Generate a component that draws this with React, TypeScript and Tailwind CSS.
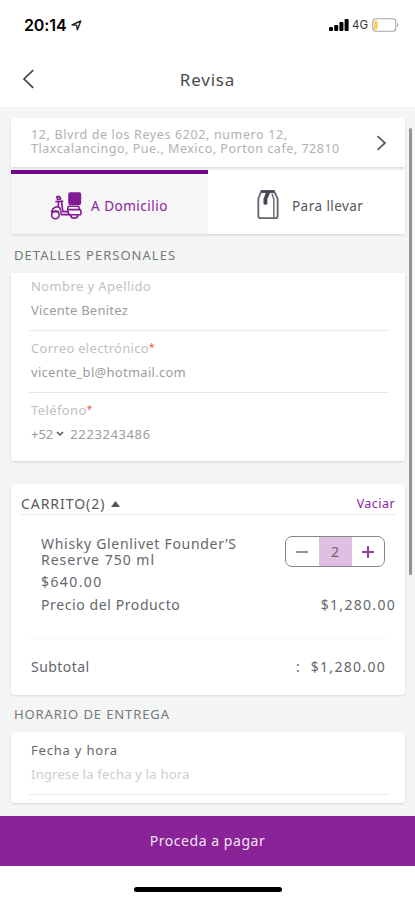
import { useState } from "react";

const fields = [
  { label: "Nombre y Apellido", value: "Vicente Benitez", required: false, labelClass: "tracking-[0.4px]", valueClass: "tracking-[0.25px]" },
  { label: "Correo electrónico", value: "vicente_bl@hotmail.com", required: true, labelClass: "tracking-[0.3px]", valueClass: "tracking-[0.28px]" },
];

function StatusBar() {
  return (
    <div className="h-[50px] pl-6 pr-4 flex items-center justify-between text-black">
      <div className="flex items-center gap-1">
        <span className="font-['Inter',sans-serif] font-semibold text-[16px] leading-5 tracking-[-0.1px]">20:14</span>
        <svg width="11" height="11" viewBox="0 0 11 11" fill="none" stroke="#222" strokeWidth="1.4" strokeLinejoin="round">
          <path d="M1 4.8 L9.8 1 L6.4 9.8 L5.6 5.4 Z" />
        </svg>
      </div>
      <div className="flex items-center">
        <svg width="20" height="12" viewBox="0 0 20 12" fill="currentColor">
          <rect x="0" y="8" width="4" height="4" rx="1" />
          <rect x="5.2" y="6" width="4" height="6" rx="1" />
          <rect x="10.4" y="3" width="4" height="9" rx="1" />
          <rect x="15.6" y="0" width="4" height="12" rx="1" />
        </svg>
        <span className="ml-[3px] font-['Inter',sans-serif] text-[11.5px] leading-4 text-[#333]">4G</span>
        <svg className="ml-1" width="27" height="14" viewBox="0 0 27 14" fill="none">
          <rect x="0.8" y="0.8" width="23" height="12.4" rx="3" stroke="#a3a3a3" strokeWidth="1.1" />
          <rect x="2.2" y="2.4" width="3.4" height="9.2" rx="1.4" fill="#fbcf4a" />
          <path d="M25.2 5 C26.8 5.6 26.8 8.4 25.2 9 Z" fill="#a3a3a3" />
        </svg>
      </div>
    </div>
  );
}

function ScooterIcon() {
  return (
    <svg className="mt-[3px]" width="32" height="28" viewBox="0 0 32 28" fill="none" stroke="#821b94" strokeWidth="1.6" strokeLinecap="round" strokeLinejoin="round">
      <rect x="19" y="1" width="11.4" height="11.2" rx="1.2" fill="#821b94" />
      <path d="M6.8 4.8 L9.4 4.4 L10.8 7 L7.4 7.4 Z M6 9.6 L12.8 9.2" />
      <path d="M8.8 9.6 L8 15 M11.6 9.4 L12.8 19.6 H18" />
      <path d="M1.6 19.6 C2.4 15.4 7 13.4 10 16 L11.4 22.6 H19.4" />
      <path d="M1.6 19.6 H8.4" />
      <circle cx="5.4" cy="22.9" r="3.8" />
      <path d="M18.4 14.2 H28.6 L29.4 17 C31.2 18.4 31.4 20.6 30.6 22.8 H19.4 C17.4 20 17.2 17 18.4 14.2 Z" />
      <path d="M18.6 17.6 H29" />
      <path d="M20.5 23 A3.8 3.8 0 0 0 28 23" />
    </svg>
  );
}

function BagIcon() {
  return (
    <svg className="ml-px mt-px" width="22" height="31" viewBox="0 0 23 31" fill="none" stroke="#666572" strokeWidth="1.9" strokeLinejoin="round">
      <path d="M4.6 1.4 H17.8 L21.6 9.4 V27.4 Q21.6 29.8 19.2 29.8 H3.8 Q1.4 29.8 1.4 27.4 V9.4 Z" />
      <path d="M4.6 2.2 H17.8" stroke="#454356" strokeWidth="2.4" />
      <path d="M15.6 4 L17.6 10 V29.4" strokeWidth="1.5" />
      <path d="M9.4 3.2 H13.6 L10.6 9.8 V15 L8.8 15.8 L7 15 V9.8 Z" fill="#454356" stroke="#454356" strokeWidth="0.4" />
    </svg>
  );
}

function App() {
  const [tab, setTab] = useState("domicilio");
  const [quantity, setQuantity] = useState(2);

  return (
    <div className="relative h-[900px] w-[415px] overflow-hidden bg-white flex flex-col font-['Noto_Sans',sans-serif] text-[#66666b]">
      <StatusBar />
      <header className="h-[58px] shrink-0 grid grid-cols-3 items-center border-b border-[#f0f0f0] pt-px">
        <svg className="ml-[22px]" width="13" height="20" viewBox="0 0 13 20" fill="none" stroke="#3c3b4b" strokeWidth="1.6">
          <path d="M11.2 1.2 L2 10 L11.2 18.8" />
        </svg>
        <h1 className="text-center text-[17px] leading-6 tracking-[0.8px] text-[#4b4b4f] pt-px">Revisa</h1>
      </header>

      <main className="h-[708px] shrink-0 bg-[#f4f5f5] pl-[11px] pr-[10px] pt-[10px]">
        <section className="h-[49px] bg-white shadow-sm rounded-t-sm flex items-center justify-between pl-5 pr-[18px]">
          <p className="text-[12.5px] leading-[14px] text-[#b1b1b1] whitespace-nowrap pb-[2px]">
            <span className="block tracking-[0.62px]">12, Blvrd de los Reyes 6202, numero 12,</span>
            <span className="block tracking-[0.52px]">Tlaxcalancingo, Pue., Mexico, Porton cafe, 72810</span>
          </p>
          <svg width="11" height="16" viewBox="0 0 11 16" fill="none" stroke="#5d5d60" strokeWidth="1.8">
            <path d="M1.5 1.2 L9 8 L1.5 14.8" />
          </svg>
        </section>

        <section className="mt-[3px] h-[64px] bg-white shadow-sm flex">
          <button
            className={`w-[197px] flex items-center pl-[39px] gap-[9px] border-t-4 ${tab === "domicilio" ? "border-[#72078a] bg-[#f6f6f6] text-[#8b239c]" : "border-transparent"}`}
            onClick={() => setTab("domicilio")}
          >
            <ScooterIcon />
            <span className="text-[13.5px] leading-5 tracking-[0.5px] pt-1">A Domicilio</span>
          </button>
          <button
            className={`w-[197px] flex items-center pl-[48px] gap-[13px] border-t-4 ${tab === "llevar" ? "border-[#72078a] bg-[#f6f6f6] text-[#8b239c]" : "border-transparent text-[#55555a]"}`}
            onClick={() => setTab("llevar")}
          >
            <BagIcon />
            <span className="text-[13.5px] leading-5 tracking-[0.45px] pt-1">Para llevar</span>
          </button>
        </section>

        <h2 className="h-[39px] pl-[3px] pt-[11px] text-[13px] leading-5 tracking-[1.03px] text-[#77787a]">DETALLES PERSONALES</h2>

        <section className="h-[188px] bg-white shadow-sm pl-[18px] pr-4 text-[13px] leading-5">
          {fields.map((field, i) => (
            <div key={field.label} className={`border-b border-[#e9e9e9] pl-[2px] ${i === 0 ? "h-[58px] pt-[3px]" : "h-[62px] pt-[7px]"}`}>
              <p className={`h-6 text-[#c1c1c1] ${field.labelClass}`}>
                {field.label}
                {field.required && <span className="text-[#f25555] text-[10px] align-[2px] leading-none">*</span>}
              </p>
              <p className={`text-[#9c9c9c] ${field.valueClass}`}>{field.value}</p>
            </div>
          ))}
          <div className="pl-[2px] pt-[7px]">
            <p className="h-6 text-[#c1c1c1] tracking-[0.4px]">
              Teléfono<span className="text-[#f25555] text-[10px] align-[2px] leading-none">*</span>
            </p>
            <p className="flex items-center text-[#9c9c9c]">
              <span>+52</span>
              <svg className="ml-[3px] mr-[6px]" width="8" height="6" viewBox="0 0 8 6" fill="none" stroke="#555" strokeWidth="1.5">
                <path d="M1 1 L4 4 L7 1" />
              </svg>
              <span className="tracking-[0.6px]">2223243486</span>
            </p>
          </div>
        </section>

        <section className="mt-[23px] h-[211px] bg-white shadow-sm rounded-sm text-[14px]">
          <div className="mx-[9px] h-[31px] border-b border-[#ececec] flex items-center justify-between pt-[9px] pl-[1px]">
            <div className="flex items-center gap-[6px] text-[#59595e]">
              <span className="text-[14px] leading-5 tracking-[0.95px]">CARRITO(2)</span>
              <svg width="9" height="6" viewBox="0 0 9 6" fill="#55545f">
                <path d="M0 6 L4.5 0 L9 6 Z" />
              </svg>
            </div>
            <button className="text-[12.5px] leading-5 tracking-[0.45px] text-[#8b239c] pr-px">Vaciar</button>
          </div>
          <div className="flex justify-between pl-[30px] pr-5 pt-[21px]">
            <p className="leading-4 whitespace-nowrap">
              <span className="block tracking-[0.7px]">Whisky Glenlivet Founder’S</span>
              <span className="block tracking-[1px]">Reserve 750 ml</span>
            </p>
            <div className="w-[100px] h-[31px] rounded-[7px] border border-[#85858b] flex overflow-hidden">
              <button className="flex-1 flex items-center justify-center" onClick={() => setQuantity(Math.max(0, quantity - 1))}>
                <span className="w-3 h-[2px] bg-[#929297]" />
              </button>
              <span className="w-[33px] bg-[#dfbfe2] flex items-center justify-center leading-5">{quantity}</span>
              <button className="flex-1 flex items-center justify-center" onClick={() => setQuantity(quantity + 1)}>
                <svg width="12" height="12" viewBox="0 0 12 12" stroke="#9639a6" strokeWidth="2">
                  <path d="M6 0 V12 M0 6 H12" />
                </svg>
              </button>
            </div>
          </div>
          <p className="pl-[30px] pt-1 leading-5 tracking-[1.4px]">$640.00</p>
          <div className="flex justify-between pl-[30px] pr-[9px] pt-[3px] leading-5">
            <span className="tracking-[0.6px]">Precio del Producto</span>
            <span className="tracking-[1.3px]">$1,280.00</span>
          </div>
          <div className="mt-[23px] ml-[18px] mr-[19px] border-t border-[#f6f6f6] flex pt-[18px] pl-[2px] leading-5">
            <span className="grow tracking-[0.45px]">Subtotal</span>
            <span className="mr-[11px]">:</span>
            <span className="tracking-[1.3px]">$1,280.00</span>
          </div>
        </section>

        <h2 className="h-[37px] pl-[3px] pt-[9px] text-[13px] leading-5 tracking-[0.9px] text-[#77787a]">HORARIO DE ENTREGA</h2>

        <section className="h-[71px] bg-white shadow-sm rounded-sm pl-[18px] pr-4 pt-2 text-[13px] leading-5">
          <div className="h-[55px] pl-[2px] border-b border-[#ececec]">
            <p className="h-6 text-[#67676b] tracking-[0.8px]">Fecha y hora</p>
            <p className="text-[#cdcdcd] tracking-[0.22px]">Ingrese la fecha y la hora</p>
          </div>
        </section>
      </main>

      <button className="h-[50px] shrink-0 bg-[#892397] text-[#f3e2f5] text-[14px] leading-5 tracking-[0.55px]">Proceda a pagar</button>
      <div className="pt-[21px] flex justify-center">
        <div className="w-[148px] h-[5px] rounded-full bg-black" />
      </div>

      <div className="absolute left-[409px] top-[128px] w-[3px] h-[447px] rounded-full bg-[#929394]" />
    </div>
  );
}

export default App;
